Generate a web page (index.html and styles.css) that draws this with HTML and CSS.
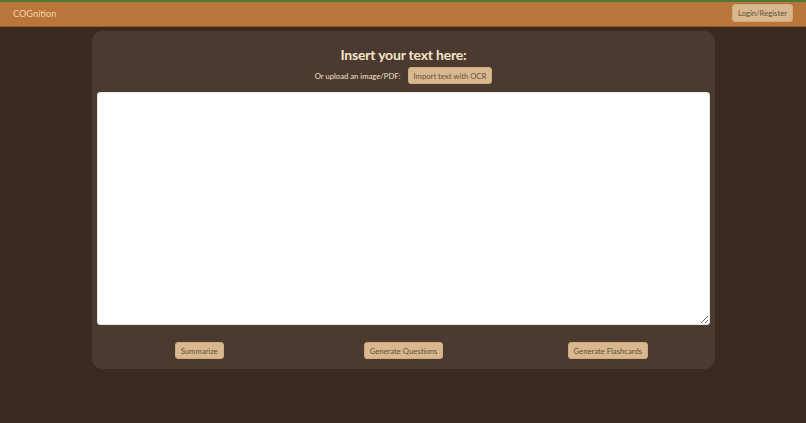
FILE: index.html
```html
<!DOCTYPE html>
<html lang="en">
<head>
<meta charset="utf-8">
<title>COGnition</title>
<link rel="stylesheet" href="styles.css">
</head>
<body>
<header class="topbar">
  <span class="brand">COGnition</span>
  <button class="btn btn-login">Login/Register</button>
</header>
<main class="page">
  <section class="card">
    <h1 class="title">Insert your text here:</h1>
    <div class="upload-row">
      <span class="upload-label">Or upload an image/PDF:</span>
      <button class="btn">Import text with OCR</button>
    </div>
    <textarea class="input"></textarea>
    <div class="actions">
      <button class="btn">Summarize</button>
      <button class="btn">Generate Questions</button>
      <button class="btn">Generate Flashcards</button>
    </div>
  </section>
</main>
</body>
</html>
```
FILE: styles.css
```css
* { box-sizing: border-box; }
html, body { margin: 0; padding: 0; }
body {
  background: #3b2a20;
  font-family: Lato, "Open Sans", sans-serif;
  height: 423px;
  overflow: hidden;
}
.topbar {
  height: 27px;
  background: #b9753a;
  border-top: 2px solid #4b7a35;
  border-bottom: 1px solid #8a5a30;
  display: flex;
  align-items: center;
  justify-content: space-between;
  padding: 0 13px 0 13px;
}
.brand {
  color: #f1d6a8;
  font-size: 9.2px;
  margin-top: -1px;
}
.btn {
  font-family: inherit;
  background: #d9b88f;
  color: #65503a;
  border: 1px solid #cfac80;
  border-radius: 3px;
  font-size: 7.7px;
  height: 17px;
  padding: 0 5px;
  cursor: pointer;
}
.btn-login { height: 18px; margin-top: -2px; }
.page {
  padding: 4px 91px 0 92px;
}
.card {
  background: #4b3a30;
  border-radius: 10px;
  height: 338px;
  padding: 13px 5px 0;
  display: flex;
  flex-direction: column;
  align-items: stretch;
}
.title {
  margin: 0;
  text-align: center;
  color: #f6e6c6;
  font-size: 14px;
  letter-spacing: -0.2px;
  font-weight: 700;
  line-height: 22px;
}
.upload-row {
  display: flex;
  justify-content: center;
  align-items: center;
  gap: 7px;
  margin-top: 1px;
}
.upload-label {
  color: #f2e0c4;
  font-size: 7.7px;
}
.input {
  margin-top: 8px;
  height: 233px;
  width: 100%;
  background: #fff;
  border: 1px solid #ece6e0;
  border-radius: 3px;
  resize: vertical;
}
.actions {
  display: grid;
  grid-template-columns: 1fr 1fr 1fr;
  justify-items: center;
  margin-top: 17px;
}
```
